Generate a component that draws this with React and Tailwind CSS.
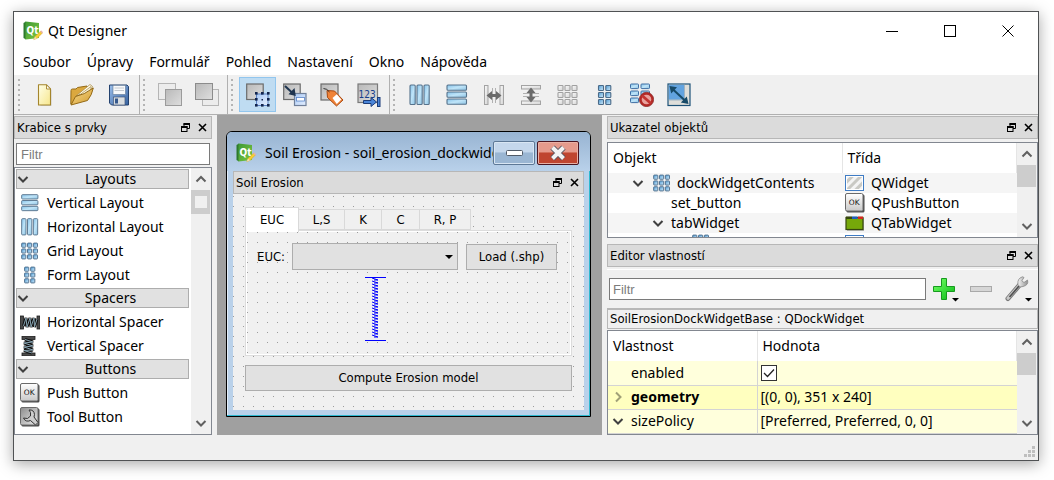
import React from "react";

const UI = "font-['Noto_Sans',sans-serif]";
const SMALL = "font-['DejaVu_Sans_Condensed','DejaVu_Sans',sans-serif]";

/* ---------- shared paint ---------- */

function Paints() {
  return (
    <svg className="absolute size-0" aria-hidden="true">
      <defs>
        <linearGradient id="bar" x1="0" y1="0" x2="1" y2="1">
          <stop offset="0" stopColor="#86c3ea" />
          <stop offset="0.5" stopColor="#bfe4f8" />
          <stop offset="1" stopColor="#8fc4e4" />
        </linearGradient>
        <linearGradient id="cell" x1="0" y1="0" x2="1" y2="1">
          <stop offset="0" stopColor="#4f9bd4" />
          <stop offset="1" stopColor="#d4ecfa" />
        </linearGradient>
        <linearGradient id="grey" x1="0" y1="0" x2="1" y2="1">
          <stop offset="0" stopColor="#b9b9b9" />
          <stop offset="1" stopColor="#dedede" />
        </linearGradient>
        <linearGradient id="paleGrey" x1="0" y1="0" x2="1" y2="1">
          <stop offset="0" stopColor="#fafafa" />
          <stop offset="1" stopColor="#d4d4d4" />
        </linearGradient>
        <linearGradient id="page" x1="0" y1="0" x2="1" y2="1">
          <stop offset="0" stopColor="#ffffe8" />
          <stop offset="1" stopColor="#f6e68c" />
        </linearGradient>
        <linearGradient id="folder" x1="0" y1="0" x2="1" y2="1">
          <stop offset="0" stopColor="#f9dd92" />
          <stop offset="1" stopColor="#d29a2c" />
        </linearGradient>
        <linearGradient id="disk" x1="0" y1="0" x2="1" y2="1">
          <stop offset="0" stopColor="#9cc0ec" />
          <stop offset="1" stopColor="#35609f" />
        </linearGradient>
        <linearGradient id="blueBox" x1="0" y1="0" x2="1" y2="1">
          <stop offset="0" stopColor="#a8c8f4" />
          <stop offset="1" stopColor="#e4efff" />
        </linearGradient>
        <linearGradient id="qt" x1="0" y1="0" x2="1" y2="1">
          <stop offset="0" stopColor="#3f9a35" />
          <stop offset="1" stopColor="#7cc63f" />
        </linearGradient>
        <linearGradient id="plus" x1="0" y1="0" x2="1" y2="1">
          <stop offset="0" stopColor="#7cff6a" />
          <stop offset="0.5" stopColor="#3de03d" />
          <stop offset="1" stopColor="#0cb41a" />
        </linearGradient>
        <linearGradient id="steel" x1="0" y1="0" x2="1" y2="0">
          <stop offset="0" stopColor="#f4f4f4" />
          <stop offset="1" stopColor="#8f8f8f" />
        </linearGradient>
        <linearGradient id="metal" x1="0" y1="0" x2="0" y2="1">
          <stop offset="0" stopColor="#ffffff" />
          <stop offset="1" stopColor="#c9c9c9" />
        </linearGradient>
        <linearGradient id="toolFace" x1="0" y1="0" x2="1" y2="1">
          <stop offset="0" stopColor="#8c8c8c" />
          <stop offset="1" stopColor="#ececec" />
        </linearGradient>
        <pattern id="hatch" width="6" height="6" patternUnits="userSpaceOnUse" patternTransform="rotate(45)">
          <rect width="6" height="6" fill="#f4f4f4" />
          <rect width="3" height="6" fill="#c9c9c4" />
        </pattern>
      </defs>
    </svg>
  );
}

function Icon({ size = 24, box = 24, children }) {
  return (
    <svg width={size} height={size} viewBox={`0 0 ${box} ${box}`} className="block shrink-0" aria-hidden="true">
      {children}
    </svg>
  );
}

/* ---------- application icons ---------- */

function QtLogo() {
  return (
    <Icon size={20} box={20}>
      <path d="M0.500 2 L3 0.500 V18.500 L0.500 17Z" fill="#2c7a2c" />
      <path d="M2.500 0.500 L16 2 V17 L2.500 18.500Z" fill="url(#qt)" />
      <text x="3.500" y="12.500" fontSize="10" fontWeight="600" fill="#fff" fontFamily="DejaVu Sans Condensed, sans-serif">Qt</text>
      <path d="M10.800 18.600 L12 15.500 L17.600 10.200 L19.400 12 L14 17.400Z" fill="#f6cf35" stroke="#d9a520" strokeWidth="0.500" />
      <path d="M17.200 10.600 L18.400 9.600 L20 11.200 L19 12.400Z" fill="#e8b0a8" />
      <path d="M10.600 18.800 L12 15.600 L14 17.400Z" fill="#ecdcb8" />
    </Icon>
  );
}

const NewIcon = () => (
  <Icon>
    <path d="M6.500 2.500 H14 L17.500 6 V22 H6.500Z" fill="#999" opacity="0.35" transform="translate(1 1)" />
    <path d="M5.500 1.800 H13.500 L17.500 6 V22 H5.500Z" fill="url(#page)" stroke="#a4852c" strokeWidth="1.1" strokeLinejoin="round" />
    <path d="M13.500 1.800 V6 H17.500Z" fill="#fff" stroke="#a4852c" strokeWidth="0.9" strokeLinejoin="round" />
  </Icon>
);

const OpenIcon = () => (
  <Icon>
    <path d="M0.800 21 L1 7.500 Q1 6 2.500 6 L6 6 L7.500 4.500 L17 3 L18 8Z" fill="#dba83e" stroke="#946a17" />
    <path d="M6 13 L20 1.500 L22.500 3.500 L21 8Z" fill="#fffdf0" stroke="#a98b45" strokeWidth="0.8" />
    <path d="M6 14.500 L21 3.500 L21 9Z" fill="#f4eed4" stroke="#a98b45" strokeWidth="0.7" />
    <path d="M1 22 L5.500 13.500 Q14 12 23.300 5 Q22 12 17.500 17.500Z" fill="url(#folder)" stroke="#946a17" strokeLinejoin="round" />
  </Icon>
);

const SaveIcon = () => (
  <Icon>
    <path d="M2.500 2 H20 L21.500 3.500 V22 H4.500 L2.500 20Z" fill="url(#disk)" stroke="#24426f" strokeLinejoin="round" />
    <rect x="6" y="2.300" width="12.500" height="9.200" fill="#f7f9fb" stroke="#5d7593" strokeWidth="0.6" />
    <path d="M7.500 5 H17 M7.500 7.500 H17" stroke="#c4c9cf" />
    <rect x="6.500" y="14" width="11.500" height="8" fill="#d9dde0" stroke="#42587a" strokeWidth="0.7" />
    <rect x="8" y="15.500" width="3" height="5" fill="#35588c" />
  </Icon>
);

const LowerIcon = () => (
  <Icon>
    <rect x="0.500" y="0.500" width="17" height="16" fill="#ececec" stroke="#b5b5b5" />
    <rect x="7.500" y="6.500" width="16" height="16" fill="url(#grey)" stroke="#9b9b9b" />
  </Icon>
);

const RaiseIcon = () => (
  <Icon>
    <rect x="7.500" y="6.500" width="16" height="16" fill="#ececec" stroke="#b5b5b5" />
    <rect x="0.500" y="0.500" width="17" height="16" fill="url(#grey)" stroke="#8c8c8c" />
  </Icon>
);

const WidgetsIcon = () => (
  <Icon>
    <rect x="0.700" y="1" width="16.500" height="15.500" fill="url(#grey)" stroke="#6b6b6b" strokeWidth="1.200" />
    <rect x="10.500" y="11" width="11.500" height="11.500" fill="url(#blueBox)" stroke="#5c82c4" />
    <g fill="#12244d">
      {[9, 15, 21].map((x) => [9.5, 15.5, 21.5].map((y) => (x === 15 && y === 15.5 ? null : <rect key={`${x}-${y}`} x={x} y={y - 0.5} width="2.600" height="2.600" />)))}
      <rect x="15.500" y="16" width="1.500" height="1.500" />
    </g>
  </Icon>
);

const SignalsIcon = () => (
  <Icon>
    <rect x="0.700" y="1" width="16.500" height="15.500" fill="url(#grey)" stroke="#6b6b6b" strokeWidth="1.200" />
    <rect x="11.500" y="10.500" width="11.500" height="12" fill="url(#blueBox)" stroke="#6f7f99" strokeWidth="1.200" />
    <rect x="13.500" y="14.500" width="8" height="3.500" fill="#fff" stroke="#5a84c8" strokeWidth="0.800" />
    <path d="M2 3 L10 10.500" stroke="#1f3550" strokeWidth="2" />
    <path d="M12.800 13 L5.500 11.300 L11.500 5Z" fill="#1f3550" />
  </Icon>
);

const BuddiesIcon = () => (
  <Icon>
    <rect x="1" y="1" width="17" height="16" fill="url(#grey)" stroke="#6b6b6b" strokeWidth="1.200" />
    <path d="M7 7.500 L14.500 8 L23 17 L16.500 23 L7.500 14.500Z" fill="#f08338" stroke="#a94a12" strokeLinejoin="round" />
    <path d="M12.500 15 L16.800 11.200 L21.300 16.500 L16.800 21Z" fill="#fff" />
    <path d="M3.500 5.500 Q7 5.500 9.500 9" fill="none" stroke="#333" />
  </Icon>
);

const TabOrderIcon = () => (
  <Icon>
    <rect x="1" y="1" width="19.500" height="18.500" fill="url(#grey)" stroke="#7a7a7a" strokeWidth="1.200" />
    <text x="1.500" y="15" fontSize="10" fill="#173f8c" fontFamily="DejaVu Sans Condensed, sans-serif">123</text>
    <path d="M6.500 17.500 H14 V14.500 L19.500 19 L14 23.500 V20.500 H6.500Z" fill="#4a85d8" stroke="#1a3b78" strokeLinejoin="round" />
    <rect x="20.500" y="14.500" width="2.500" height="9" fill="#4a85d8" stroke="#1a3b78" />
  </Icon>
);

const HBars = () => (
  <g fill="url(#bar)" stroke="#56728b" strokeWidth="1.100">
    {[2, 9, 16].map((x) => <rect key={x} x={x} y="2" width="5.200" height="19.500" rx="1" />)}
  </g>
);
const VBars = () => (
  <g fill="url(#bar)" stroke="#56728b" strokeWidth="1.100">
    {[2, 9, 16].map((y) => <rect key={y} x="2" y={y} width="19.500" height="5.200" rx="1" />)}
  </g>
);
const HorizontalIcon = ({ size }) => <Icon size={size}><HBars /></Icon>;
const VerticalIcon = ({ size }) => <Icon size={size}><VBars /></Icon>;

const HSplitIcon = () => (
  <Icon>
    <g fill="url(#paleGrey)" stroke="#a3a3a3">
      <rect x="2.500" y="2.500" width="3.500" height="19" />
      <rect x="18" y="2.500" width="3.500" height="19" />
    </g>
    <path d="M10.500 5 V20 M13.500 5 V20" stroke="#b0b0b0" />
    <path d="M4.500 12.500 L10 8 V11 H14 V8 L19.500 12.500 L14 17 V14 H10 V17Z" fill="#6b6b6b" />
  </Icon>
);
const VSplitIcon = () => (
  <Icon>
    <g fill="url(#paleGrey)" stroke="#a3a3a3">
      <rect x="2.500" y="2.500" width="19" height="3.500" />
      <rect x="2.500" y="18" width="19" height="3.500" />
    </g>
    <path d="M4 10.500 H20 M4 13.500 H20" stroke="#b0b0b0" />
    <path d="M12 4.500 L16.500 10 H13.500 V14 H16.500 L12 19.500 L7.500 14 H10.500 V10 H7.500Z" fill="#6b6b6b" />
  </Icon>
);

function Cells({ cols, grey }) {
  return (
    <g fill={grey ? "url(#paleGrey)" : "url(#cell)"} stroke={grey ? "#a0a0a0" : "#4a6a88"} strokeWidth="1.100">
      {cols.map((x) => [2.5, 9.5, 16.5].map((y) => <rect key={`${x}-${y}`} x={x} y={y} width="5" height="5" rx="0.800" />))}
    </g>
  );
}
const GridIcon = ({ size, grey }) => <Icon size={size}><Cells cols={[2, 9, 16]} grey={grey} /></Icon>;
const FormIcon = ({ size }) => <Icon size={size}><Cells cols={[5.5, 12.8]} /></Icon>;

const BreakIcon = () => (
  <Icon>
    <g fill="url(#bar)" stroke="#3f6ea3">
      {[1, 8, 15].map((y) => <g key={y}><rect x="0.500" y={y} width="8" height="4.600" rx="0.800" /><rect x="11" y={y} width="8.500" height="4.600" rx="0.800" /></g>)}
    </g>
    <circle cx="16.500" cy="16.500" r="6" fill="#e9a29d" stroke="#b32a27" strokeWidth="2.400" />
    <path d="M12 12.500 L21 20.500" stroke="#c23431" strokeWidth="2.800" />
    <circle cx="16.500" cy="16.500" r="7.200" fill="none" stroke="#7d1d1b" strokeWidth="0.600" />
  </Icon>
);

const AdjustIcon = () => (
  <Icon>
    <rect x="1" y="1" width="22" height="21.500" fill="#dededa" stroke="#1d5278" strokeWidth="1.200" />
    <rect x="1.800" y="1.800" width="15.500" height="15" fill="#62a3e0" />
    <path d="M17.500 1.800 V17 H1.800" fill="none" stroke="#9fb3c2" />
    <path d="M5 5.500 L19 18.500" stroke="#174a68" strokeWidth="2" />
    <path d="M2.500 3 L10 4.300 L4.200 10.500Z M21.500 21 L13.800 19.500 L19.800 13.500Z" fill="#174a68" />
  </Icon>
);

const HSpacerIcon = () => (
  <Icon size={20} box={20}>
    <g fill="#4b4b4b" stroke="#1c1c1c" strokeWidth="0.800">
      <rect x="0.500" y="4" width="3" height="13" />
      <rect x="17" y="4" width="3" height="13" />
    </g>
    <path d="M3.500 14 L6 6 L7 15 L10 6 L11 15 L14 6 L14.500 15 L17 7" fill="none" stroke="#111" strokeWidth="3" />
    <path d="M3.500 14 L6 6 L7 15 L10 6 L11 15 L14 6 L14.500 15 L17 7" fill="none" stroke="#86a2b0" strokeWidth="1" />
  </Icon>
);
const VSpacerIcon = () => (
  <Icon size={20} box={20}>
    <g fill="#4b4b4b" stroke="#1c1c1c" strokeWidth="0.800">
      <rect x="2" y="0.500" width="13" height="3" />
      <rect x="2" y="17" width="13" height="3" />
    </g>
    <path d="M5 3.500 L13 6 L4 7 L13 10 L4 11 L13 14 L4 14.500 L12 17" fill="none" stroke="#111" strokeWidth="3" />
    <path d="M5 3.500 L13 6 L4 7 L13 10 L4 11 L13 14 L4 14.500 L12 17" fill="none" stroke="#86a2b0" strokeWidth="1" />
  </Icon>
);

const PushIcon = ({ size = 20 }) => (
  <Icon size={size} box={20}>
    <rect x="1.500" y="1.500" width="18" height="18" rx="1.500" fill="#4a4a4a" />
    <rect x="0.500" y="0.500" width="17.500" height="17.500" rx="1.500" fill="url(#metal)" stroke="#6a6a6a" />
    <text x="3.800" y="12" fontSize="7.500" fill="#111" fontFamily="DejaVu Sans, sans-serif">OK</text>
  </Icon>
);
const ToolIcon = () => (
  <Icon size={20} box={20}>
    <rect x="1.500" y="1.500" width="18" height="18" rx="1.500" fill="#4a4a4a" />
    <rect x="0.500" y="0.500" width="17.500" height="17.500" rx="1.500" fill="url(#toolFace)" stroke="#6a6a6a" />
    <path d="M9 3 Q14 2.500 14.500 7.500 L14 10 L18 15.500 L15.500 18 L10.500 13.500 Q5.500 15.500 3.500 11 L7.500 11.500 L10.500 9 L10.500 5.500Z" fill="#cdcdcd" stroke="#333" strokeLinejoin="round" />
  </Icon>
);

const WidgetClassIcon = () => (
  <Icon size={20} box={20}>
    <rect x="0.500" y="2.500" width="18" height="15" fill="url(#hatch)" />
    <rect x="1.500" y="3.500" width="16" height="13" fill="none" stroke="#fff" />
    <rect x="0.500" y="2.500" width="18" height="15" fill="none" stroke="#3f7cc4" />
  </Icon>
);
const TabClassIcon = () => (
  <Icon size={20} box={20}>
    <rect x="2" y="5" width="17" height="13" fill="#777" opacity="0.500" />
    <rect x="1" y="4.500" width="17" height="12" fill="#76a80a" stroke="#36460e" strokeWidth="1.200" />
    <rect x="1" y="3.500" width="6" height="2.500" fill="#36460e" />
    <rect x="7" y="3.500" width="5.500" height="2.500" fill="#1d5dbd" />
    <rect x="13" y="3.500" width="5" height="2.500" fill="#d5281f" />
  </Icon>
);

/* ---------- small controls ---------- */

function Chevron({ dir = "down", tone = "#404040" }) {
  const d = {
    down: "M1.500 4 L6 8.500 L10.500 4",
    up: "M1.500 8.500 L6 4 L10.500 8.500",
    right: "M4 1.500 L8.500 6 L4 10.500",
  }[dir];
  return (
    <svg width="12" height="12" viewBox="0 0 12 12" className="block shrink-0" aria-hidden="true">
      <path d={d} fill="none" stroke={tone} strokeWidth="2" />
    </svg>
  );
}

function DockButtons() {
  return (
    <div className="flex">
      <button type="button" aria-label="Float" className="flex h-5 w-[17px] items-center justify-center">
        <svg width="9" height="9" viewBox="0 0 9 9" aria-hidden="true">
          <path d="M3 3 V0.500 H8.500 V5.500 H6" fill="none" stroke="#000" />
          <path d="M2.500 1 H9 M0 4 H6.500" stroke="#000" strokeWidth="2" />
          <rect x="0.500" y="3.500" width="5.500" height="5" fill="none" stroke="#000" />
        </svg>
      </button>
      <button type="button" aria-label="Close" className="flex h-5 w-[17px] items-center justify-center">
        <svg width="9" height="9" viewBox="0 0 9 9" aria-hidden="true">
          <path d="M1 1 L8 8 M8 1 L1 8" stroke="#000" strokeWidth="1.600" />
        </svg>
      </button>
    </div>
  );
}

function DockTitle({ children }) {
  return (
    <div className={`${SMALL} flex h-[23px] shrink-0 items-center justify-between border border-[#b7b7b7] bg-[#dbdbdb] pl-[2px] text-[13px] text-black`}>
      <h2>{children}</h2>
      <DockButtons />
    </div>
  );
}

function ScrollBar({ children }) {
  return (
    <div className="flex w-5 shrink-0 flex-col items-center justify-between bg-[#f0f0f0] pr-px">
      <div className="flex w-full flex-col items-center">
        <button type="button" aria-label="Scroll up" className="flex h-[22px] w-full items-center justify-center">
          <Chevron dir="up" tone="#606060" />
        </button>
        {children}
      </div>
      <button type="button" aria-label="Scroll down" className="flex h-[22px] w-full items-center justify-center">
        <Chevron tone="#606060" />
      </button>
    </div>
  );
}

/* ---------- title, menu, toolbar ---------- */

function TitleBar() {
  return (
    <header className="flex h-[37px] items-center pr-px pl-[9px]">
      <QtLogo />
      <h1 className="ml-[5px] flex-1 text-sm">Qt Designer</h1>
      <div className="flex">
        <button type="button" aria-label="Minimize" className="flex h-9 w-[58px] items-center justify-center">
          <svg width="12" height="12" viewBox="0 0 12 12"><path d="M0 6.500 H12" stroke="#000" /></svg>
        </button>
        <button type="button" aria-label="Maximize" className="flex h-9 w-[58px] items-center justify-center">
          <svg width="12" height="12" viewBox="0 0 12 12"><rect x="0.500" y="0.500" width="11" height="11" fill="none" stroke="#000" /></svg>
        </button>
        <button type="button" aria-label="Close" className="flex h-9 w-[58px] items-center justify-center">
          <svg width="12" height="12" viewBox="0 0 12 12"><path d="M0.500 0.500 L11.500 11.500 M11.500 0.500 L0.500 11.500" stroke="#000" /></svg>
        </button>
      </div>
    </header>
  );
}

function MenuBar() {
  const items = ["Soubor", "Úpravy", "Formulář", "Pohled", "Nastavení", "Okno", "Nápověda"];
  return (
    <nav className="flex h-[26px] items-center gap-4 pl-[9px] text-sm">
      {items.map((label) => (
        <button type="button" key={label}>{label}</button>
      ))}
    </nav>
  );
}

const groups = [
  [["Nový", NewIcon], ["Otevřít", OpenIcon], ["Uložit", SaveIcon]],
  [["Dozadu", LowerIcon], ["Dopředu", RaiseIcon]],
  [["Widgety", WidgetsIcon], ["Signály", SignalsIcon], ["Buddies", BuddiesIcon], ["Pořadí", TabOrderIcon]],
  [
    ["Vodorovně", HorizontalIcon],
    ["Svisle", VerticalIcon],
    ["Vodorovný splitter", HSplitIcon],
    ["Svislý splitter", VSplitIcon],
    ["Mřížka", () => <GridIcon grey />],
    ["Formulář", FormIcon],
    ["Zrušit rozvržení", BreakIcon],
    ["Přizpůsobit", AdjustIcon],
  ],
];

function Toolbar() {
  return (
    <div className="flex h-10 border-b border-[#b0b0b0] bg-[#f0f0f0] pl-px">
      {groups.map((group, i) => (
        <div key={i} className={`flex items-center ${i < 3 ? "border-r border-[#b0b0b0] pr-[2px]" : ""}`}>
          <svg width="11" height="32" viewBox="0 0 11 32" aria-hidden="true">
            {[1, 6, 11, 16, 21, 26, 31].map((y) => (
              <rect key={y} x="3" y={y - 1} width="2" height="2" fill="#b4b4b4" />
            ))}
          </svg>
          {group.map(([label, Glyph]) => (
            <button
              type="button"
              key={label}
              aria-label={label}
              className={`flex h-[35px] w-[37px] items-center justify-center ${label === "Widgety" ? "border border-[#92c6ee] bg-[#bfdcf2]" : ""}`}
            >
              <Glyph />
            </button>
          ))}
        </div>
      ))}
    </div>
  );
}

/* ---------- widget box ---------- */

const sections = [
  { title: "Layouts", items: [["Vertical Layout", VerticalIcon], ["Horizontal Layout", HorizontalIcon], ["Grid Layout", GridIcon], ["Form Layout", FormIcon]] },
  { title: "Spacers", items: [["Horizontal Spacer", HSpacerIcon], ["Vertical Spacer", VSpacerIcon]] },
  { title: "Buttons", items: [["Push Button", PushIcon], ["Tool Button", ToolIcon]] },
];

function WidgetBox() {
  return (
    <aside className="flex w-[198px] shrink-0 flex-col gap-px pt-px">
      <DockTitle>Krabice s prvky</DockTitle>
      <div className="px-[2px] pt-[3px] pb-px">
        <input
          aria-label="Filtr prvků"
          placeholder="Filtr"
          className="block h-[22px] w-full border border-[#7a7a7a] bg-white px-1 font-['Liberation_Sans',sans-serif] text-[13px] placeholder:text-[#7c7c7c]"
        />
      </div>
      <div className="flex flex-1 justify-between border border-[#828790] bg-white">
        <div className="flex-1 pb-1 pl-px">
          {sections.map((section) => (
            <section key={section.title}>
              <button type="button" className="mt-px mb-[2px] flex h-5 w-[173px] items-center border border-[#adadad] bg-[#e1e1e1] text-sm">
                <Chevron />
                <span className="flex-1 pl-1 text-center">{section.title}</span>
              </button>
              <ul>
                {section.items.map(([label, Glyph]) => (
                  <li key={label} className="flex h-6 items-center gap-[7px] pl-1 text-sm">
                    <Glyph size={20} />
                    <span>{label}</span>
                  </li>
                ))}
              </ul>
            </section>
          ))}
        </div>
        <ScrollBar>
          <div className="flex h-6 w-full items-center justify-center bg-[#cdcdcd]">
            <div className="size-3 bg-[#f0f0f0]" />
          </div>
        </ScrollBar>
      </div>
    </aside>
  );
}

/* ---------- edited form ---------- */

const DOTS = "bg-[radial-gradient(circle_at_0.5px_0.5px,#9c9c9c_0.6px,transparent_0.7px)] bg-[length:10px_10px]";

function SubWindow() {
  return (
    <section className="w-[365px] rounded-t-[6px] border border-black bg-[#b9d1ea] shadow-[inset_-1px_-1px_0_#2fb9d0,inset_1px_1px_0_#e4eef8]">
      <div className="flex h-[39px] items-center rounded-t-[5px] bg-linear-to-b from-[#98b4d2] to-[#b9d1ea] pt-[3px] pr-[11px] pl-[9px]">
        <QtLogo />
        <h2 className="ml-[9px] min-w-0 flex-1 overflow-hidden text-sm whitespace-nowrap">Soil Erosion - soil_erosion_dockwidget_base.ui</h2>
        <button type="button" aria-label="Minimize form" className="flex h-6 w-[42px] items-center justify-center rounded-[2px] border border-[#5d7896] bg-linear-to-b from-[#c4d7ec] from-45% to-[#9ab6d3] to-50% shadow-[inset_0_0_0_1px_#d8e6f4]">
          <svg width="17" height="6" viewBox="0 0 17 6"><rect x="0.500" y="0.500" width="16" height="5" rx="1" fill="#fff" stroke="#515b68" /></svg>
        </button>
        <button type="button" aria-label="Close form" className="ml-[2px] flex h-6 w-[42px] items-center justify-center rounded-[2px] border border-[#4a1420] bg-linear-to-b from-[#e59a8c] from-45% to-[#bf4530] to-50% shadow-[inset_0_0_0_1px_#e8b0a5]">
          <svg width="18" height="16" viewBox="0 0 18 16">
            <path d="M3.500 2.500 L14.500 13.500 M14.500 2.500 L3.500 13.500" stroke="#5a5560" strokeWidth="6" />
            <path d="M3.500 2.500 L14.500 13.500 M14.500 2.500 L3.500 13.500" stroke="#f3f3f3" strokeWidth="4" />
          </svg>
        </button>
      </div>
      <div className={`${SMALL} mx-[6px] mb-[6px] bg-[#f0f0f0] text-[13px]`}>
        <DockTitle>Soil Erosion</DockTitle>
        <div className={`${DOTS} mt-[2px] px-3 pt-[11px] pb-[19px]`}>
          <div role="tablist" className="relative flex items-end">
            <button type="button" role="tab" aria-selected="true" className="h-[25px] w-[54px] border border-b-0 border-[#d9d9d9] bg-white">EUC</button>
            {[["L,S", "w-[46px]"], ["K", "w-[37px]"], ["C", "w-[38px]"], ["R, P", "w-[51px]"]].map(([label, width]) => (
              <button type="button" role="tab" aria-selected="false" key={label} className={`${width} mb-[2px] h-[21px] border border-l-0 border-[#d9d9d9] bg-[#f0f0f0]`}>{label}</button>
            ))}
          </div>
          <div className="-mt-[2px] border border-[#dcdcdc] bg-white p-px">
            <div className={`${DOTS} bg-[#f0f0f0] pt-[11px] pr-[13px] pb-3 pl-[10px]`}>
              <div className="flex items-center">
                <label htmlFor="euc" className="w-[35px]">EUC:</label>
                <div className="relative flex-1">
                  <select id="euc" className="block h-[27px] w-full appearance-none border border-[#adadad] bg-[#e1e1e1]" />
                  <svg width="8" height="4" viewBox="0 0 8 4" className="pointer-events-none absolute top-3 right-[5px]"><path d="M0 0 H8 L4 4Z" fill="#000" /></svg>
                </div>
                <button type="button" className="ml-2 h-[26px] w-[91px] border border-[#adadad] bg-[#e1e1e1]">Load (.shp)</button>
              </div>
              <svg width="21" height="65" viewBox="0 0 21 65" className="mt-[7px] ml-[108px] block" aria-hidden="true">
                <path d="M0 0.500 H21 M0 63.500 H21" stroke="#00f" />
                {Array.from({ length: 20 }, (_, i) => (
                  <path key={i} d={`M7 ${1 + i * 3} L13 ${3 + i * 3} M9 ${3 + i * 3} L13 ${3 + i * 3}`} stroke="#00f" />
                ))}
              </svg>
            </div>
          </div>
          <button type="button" className="mt-[9px] block h-[26px] w-full border border-[#adadad] bg-[#e1e1e1]">Compute Erosion model</button>
        </div>
      </div>
    </section>
  );
}

/* ---------- object inspector ---------- */

function ObjectInspector() {
  return (
    <section className="flex flex-col gap-[3px]">
      <DockTitle>Ukazatel objektů</DockTitle>
      <div className="flex h-24 border border-[#828790] bg-white">
        <div className="min-w-0 flex-1 overflow-hidden">
          <table className="w-full table-fixed border-collapse text-left text-sm">
            <colgroup>
              <col className="w-[234px]" />
              <col />
            </colgroup>
            <thead>
              <tr className="h-[30px]">
                <th className="border-r border-[#e5e5e5] p-0 pl-[5px] font-normal">Objekt</th>
                <th className="border-r border-[#e5e5e5] p-0 pl-[5px] font-normal">Třída</th>
              </tr>
            </thead>
            <tbody>
              <tr className="h-5 bg-[#f5f5f5]">
                <td className="p-0"><div className="flex h-5 items-center pl-6"><Chevron /><span className="ml-2"><GridIcon size={20} /></span><span className="ml-[5px]">dockWidgetContents</span></div></td>
                <td className="p-0"><div className="flex h-5 items-center gap-[6px] pl-[3px]"><WidgetClassIcon />QWidget</div></td>
              </tr>
              <tr className="h-5">
                <td className="p-0"><div className="flex h-5 items-center pl-[63px]">set_button</div></td>
                <td className="p-0"><div className="flex h-5 items-center gap-[6px] pl-[3px]"><PushIcon />QPushButton</div></td>
              </tr>
              <tr className="h-5 bg-[#f5f5f5]">
                <td className="p-0"><div className="flex h-5 items-center gap-[7px] pl-11"><Chevron />tabWidget</div></td>
                <td className="p-0"><div className="flex h-5 items-center gap-[6px] pl-[3px]"><TabClassIcon />QTabWidget</div></td>
              </tr>
              <tr className="h-5">
                <td className="p-0"><div className="flex h-5 items-center pl-[83px]"><GridIcon size={20} /></div></td>
                <td className="p-0"><div className="flex h-5 items-center pl-[3px]"><WidgetClassIcon /></div></td>
              </tr>
            </tbody>
          </table>
        </div>
        <ScrollBar>
          <div className="h-[22px] w-full bg-[#cdcdcd]" />
        </ScrollBar>
      </div>
    </section>
  );
}

/* ---------- property editor ---------- */

function PropertyEditor() {
  return (
    <section className="flex flex-1 flex-col">
      <DockTitle>Editor vlastností</DockTitle>
      <div className="mt-[2px] flex h-[39px] items-center border-t border-white pr-[6px] pl-[2px]">
        <input
          aria-label="Filtr vlastností"
          placeholder="Filtr"
          className="block h-[22px] min-w-0 flex-1 border border-[#7a7a7a] bg-white px-[3px] font-['Liberation_Sans',sans-serif] text-[13px] placeholder:text-[#7c7c7c]"
        />
        <button type="button" aria-label="Přidat" className="ml-[7px]">
          <svg width="27" height="26" viewBox="0 0 27 26" className="block">
            <path d="M8.500 2.500 H13.500 V10.500 H21.500 V15.500 H13.500 V23.500 H8.500 V15.500 H0.500 V10.500 H8.500Z" fill="url(#plus)" stroke="#179a1e" />
            <path d="M19 22 H26 L22.500 25.500Z" fill="#000" />
          </svg>
        </button>
        <button type="button" aria-label="Odebrat" className="ml-[10px]">
          <svg width="22" height="26" viewBox="0 0 22 26" className="block"><rect x="0.500" y="10.500" width="21" height="5" fill="#d6d6d6" stroke="#a9a9a9" /></svg>
        </button>
        <button type="button" aria-label="Nastavit" className="ml-3">
          <svg width="28" height="26" viewBox="0 0 28 26" className="block">
            <path d="M4 22.500 L15.500 9" stroke="#777" strokeWidth="5" strokeLinecap="round" />
            <path d="M4 22.300 L15.500 9" stroke="#c8c8c8" strokeWidth="3" strokeLinecap="round" />
            <path d="M5.500 21 L15 10" stroke="#4e4e4e" strokeWidth="1.600" />
            <path d="M14 8.500 Q13 2.500 18.500 0.800 L20 1.500 L17.800 4.800 L20 6.500 L23.500 4 Q25 9 19 10.500 L16 11Z" fill="url(#steel)" stroke="#888" strokeWidth="0.800" />
            <path d="M21 22 H28 L24.500 25.500Z" fill="#000" />
          </svg>
        </button>
      </div>
      <div className={`${SMALL} mb-px flex h-[21px] items-center border border-t-2 border-[#b7b7b7] pl-[2px] text-[13px]`}>SoilErosionDockWidgetBase : QDockWidget</div>
      <div className="flex border border-[#828790] bg-white">
        <table className="flex-1 table-fixed border-collapse text-left text-sm">
          <colgroup>
            <col className="w-[149px]" />
            <col />
          </colgroup>
          <thead>
            <tr className="h-[30px]">
              <th className="border-r border-[#e5e5e5] p-0 pl-[5px] font-normal">Vlastnost</th>
              <th className="border-r border-[#e5e5e5] p-0 pl-[5px] font-normal">Hodnota</th>
            </tr>
          </thead>
          <tbody>
            <tr className="h-6 border-b border-[#d4d4d4] bg-[#ffffdc]">
              <td className="border-r border-[#d4d4d4] p-0 pl-[23px]"><label htmlFor="enabled">enabled</label></td>
              <td className="p-0">
                <div className="relative ml-[3px] size-4">
                  <input id="enabled" type="checkbox" defaultChecked className="block size-4 appearance-none border border-[#333] bg-white" />
                  <svg width="16" height="16" viewBox="0 0 16 16" className="pointer-events-none absolute top-0 left-0"><path d="M3 8 L6.500 11.500 L13 4.500" fill="none" stroke="#222" strokeWidth="1.300" /></svg>
                </div>
              </td>
            </tr>
            <tr className="h-6 border-b border-[#d4d4d4] bg-[#ffffbf]">
              <td className="border-r border-[#d4d4d4] p-0 font-bold"><div className="flex items-center gap-[7px] pl-1"><Chevron dir="right" tone="#a0a078" />geometry</div></td>
              <td className="p-0 pl-[3px]">[(0, 0), 351 x 240]</td>
            </tr>
            <tr className="h-6 border-b border-[#d4d4d4] bg-[#ffffdc]">
              <td className="border-r border-[#d4d4d4] p-0"><div className="flex items-center gap-[7px] pl-1"><Chevron />sizePolicy</div></td>
              <td className="p-0 pl-[3px]">[Preferred, Preferred, 0, 0]</td>
            </tr>
          </tbody>
        </table>
        <ScrollBar>
          <div className="h-[22px] w-full bg-[#cdcdcd]" />
        </ScrollBar>
      </div>
    </section>
  );
}

export default function App() {
  return (
    <div className={`${UI} bg-white pt-[11px] pr-[15px] pb-5 pl-[13px] text-black`}>
      <Paints />
      <div className="border border-[#505254] bg-white shadow-[0_3px_14px_rgba(0,0,0,0.35)]">
        <TitleBar />
        <MenuBar />
        <Toolbar />
        <main className="flex bg-[#f0f0f0]">
          <WidgetBox />
          <div className="mx-[5px] min-w-0 flex-1 overflow-hidden bg-[#a0a0a0] pt-4 pl-[9px]">
            <SubWindow />
          </div>
          <aside className="flex w-[431px] shrink-0 flex-col gap-[6px] pt-px">
            <ObjectInspector />
            <PropertyEditor />
          </aside>
        </main>
        <footer className="flex h-[25px] items-end justify-end bg-[#f0f0f0] p-[3px]">
          <svg width="11" height="11" viewBox="0 0 11 11" fill="#bfbfbf" aria-hidden="true">
            <path d="M8 0h3v3h-3z M4 4h3v3h-3z M8 4h3v3h-3z M0 8h3v3h-3z M4 8h3v3h-3z M8 8h3v3h-3z" />
          </svg>
        </footer>
      </div>
    </div>
  );
}
